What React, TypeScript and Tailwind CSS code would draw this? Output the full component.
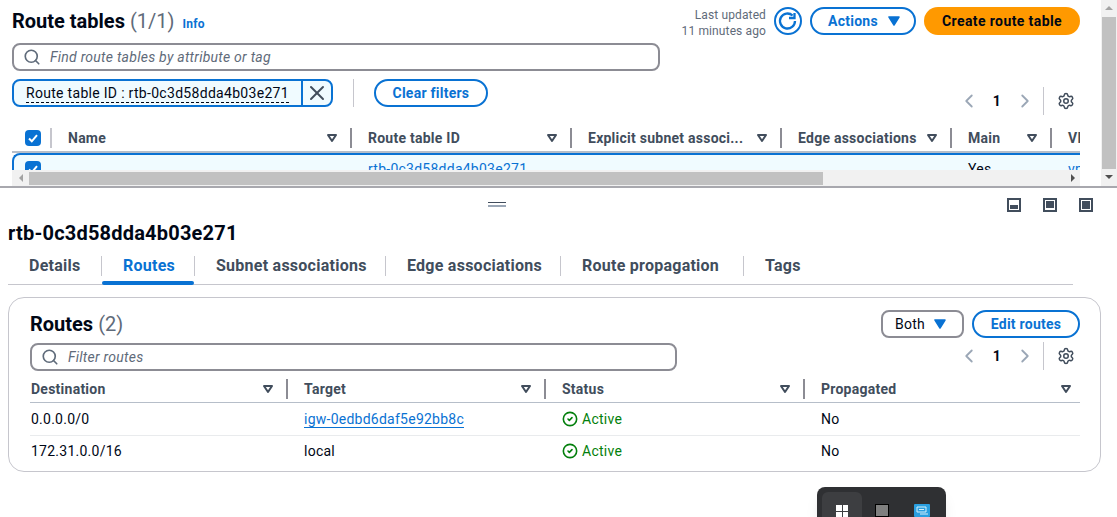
import React from 'react';
import { ChevronLeft, ChevronRight, CircleCheck, Search, Settings, X } from 'lucide-react';

function Caret({ solid = false }: { solid?: boolean }) {
  if (solid) {
    return (
      <svg width="12" height="10" viewBox="0 0 12 10" className="shrink-0">
        <path d="M1 1h10L6 9z" fill="#0972d3" stroke="#0972d3" strokeWidth="1.5" strokeLinejoin="round" />
      </svg>
    );
  }
  return (
    <svg width="12" height="10" viewBox="0 0 12 10" className="shrink-0">
      <path d="M2 2h8L6 8z" fill="none" stroke="#414d5c" strokeWidth="2" strokeLinejoin="round" />
    </svg>
  );
}

function Checkbox() {
  return (
    <span className="flex h-4 w-4 shrink-0 items-center justify-center rounded-[4px] bg-[#0972d3]">
      <svg width="12" height="12" viewBox="0 0 12 12">
        <path d="M2 6.5l2.8 2.8L10 3.2" fill="none" stroke="white" strokeWidth="2" />
      </svg>
    </span>
  );
}

function Pagination() {
  return (
    <div className="flex h-7 items-center">
      <span className="flex w-6 justify-center text-[#9ba7b6]">
        <ChevronLeft size={22} strokeWidth={2} />
      </span>
      <span className="ml-1 w-6 text-center text-sm font-bold text-[#000716]">1</span>
      <span className="ml-1 flex w-6 justify-center text-[#9ba7b6]">
        <ChevronRight size={22} strokeWidth={2} />
      </span>
      <span className="ml-[6px] h-7 w-px bg-[#c6c6cd]" />
      <span className="ml-[13px] mr-[5px] text-[#414d5c]">
        <Settings size={18} strokeWidth={2} />
      </span>
    </div>
  );
}

function SearchBox({ text, className }: { text: string; className: string }) {
  return (
    <div className={`flex h-7 items-center rounded-lg border-2 border-[#8c8c94] bg-white pl-[9px] ${className}`}>
      <Search size={18} strokeWidth={2.2} className="text-[#5f6b7a]" />
      <span className="ml-[9px] text-sm italic leading-[18px] text-[#5f6b7a]">{text}</span>
    </div>
  );
}

function HeaderCell({ label, className }: { label: string; className: string }) {
  return (
    <div className={`flex h-5 shrink-0 items-center justify-between border-r-2 border-[#8c8c94] pr-[12px] ${className}`}>
      <span className="text-sm font-bold text-[#414d5c]">{label}</span>
      <Caret />
    </div>
  );
}

function PaneIcon({ fill }: { fill: string }) {
  return (
    <span className="flex h-[14px] w-[14px] items-end border-2 border-[#414d5c] p-px">
      <span className={`w-full bg-[#414d5c] ${fill}`} />
    </span>
  );
}

function OuterTable() {
  return (
    <div className="mt-[10px] w-[1068px] overflow-hidden">
      <div className="flex h-7 items-center whitespace-nowrap border-b-2 border-[#b6bec9]">
        <div className="flex h-5 w-[40px] shrink-0 items-center border-r-2 border-[#c6c6cd] pl-[13px]">
          <Checkbox />
        </div>
        <HeaderCell label="Name" className="w-[300px] pl-[16px]" />
        <HeaderCell label="Route table ID" className="w-[220px] pl-[16px]" />
        <HeaderCell label="Explicit subnet associ..." className="w-[210px] pl-[16px]" />
        <HeaderCell label="Edge associations" className="w-[170px] pl-[16px]" />
        <HeaderCell label="Main" className="w-[100px] pl-[16px]" />
        <span className="pl-[16px] text-sm font-bold text-[#414d5c]">VPC</span>
      </div>
      <div className="flex h-[17px] overflow-hidden whitespace-nowrap rounded-tl-lg border-l-2 border-t-2 border-[#0972d3] bg-[#f0fbff] text-sm">
        <div className="w-[38px] shrink-0 pl-[11px] pt-[6px]">
          <Checkbox />
        </div>
        <div className="w-[300px] shrink-0" />
        <div className="w-[220px] shrink-0 pl-[16px] pt-[4px] text-[#0972d3]">rtb-0c3d58dda4b03e271</div>
        <div className="w-[380px] shrink-0" />
        <div className="w-[100px] shrink-0 pl-[16px] pt-[4px] text-[#000716]">Yes</div>
        <div className="pl-[16px] pt-[4px] text-[#0972d3]">vpc</div>
      </div>
    </div>
  );
}

function HorizontalScrollbar() {
  return (
    <div className="flex h-4 w-[1068px] items-center bg-[#f1f1f1]">
      <span className="flex w-[17px] justify-center">
        <span className="h-0 w-0 border-y-4 border-r-4 border-y-transparent border-r-[#a3a3a3]" />
      </span>
      <span className="h-[13px] w-[794px] bg-[#c1c1c1]" />
      <span className="ml-auto flex w-[15px] justify-center">
        <span className="h-0 w-0 border-y-4 border-l-4 border-y-transparent border-l-[#505050]" />
      </span>
    </div>
  );
}

function VerticalScrollbar() {
  return (
    <div className="flex w-4 shrink-0 flex-col items-center bg-[#f1f1f1]">
      <span className="mt-[6px] h-0 w-0 border-x-4 border-b-4 border-x-transparent border-b-[#a3a3a3]" />
      <span className="mt-[7px] h-[152px] w-[14px] bg-[#c1c1c1]" />
      <span className="mt-[6px] h-0 w-0 border-x-4 border-t-4 border-x-transparent border-t-[#505050]" />
    </div>
  );
}

function TopPanel() {
  return (
    <section className="flex h-[188px] border-b-2 border-[#a8a8ae]">
      <div className="flex-1 pl-3">
        <div className="mt-[7px] flex h-[28px] items-center justify-between pr-[21px]">
          <div className="flex items-baseline">
            <h1 className="text-xl font-bold tracking-normal text-[#000716]">
              Route tables <span className="font-normal text-[#5f6b7a]">(1/1)</span>
            </h1>
            <span className="ml-2 text-xs font-bold text-[#0972d3]">Info</span>
          </div>
          <div className="flex items-center">
            <div className="mt-1 text-right text-xs leading-4 tracking-[0.12px] text-[#5f6b7a]">
              <div>Last updated</div>
              <div>11 minutes ago</div>
            </div>
            <svg width="28" height="28" viewBox="0 0 28 28" className="ml-2">
              <circle cx="14" cy="14" r="13" fill="none" stroke="#0972d3" strokeWidth="2" />
              <path d="M21 14a7.5 7.5 0 1 1-2.4-5.5" fill="none" stroke="#0972d3" strokeWidth="2.3" />
              <path d="M20.5 6v5h-5.5" fill="none" stroke="#0972d3" strokeWidth="2.3" />
            </svg>
            <button className="ml-2 flex h-7 w-[106px] items-center gap-[10px] rounded-full border-2 border-[#0972d3] pl-[16px] text-sm font-bold text-[#0972d3]">
              Actions
              <Caret solid />
            </button>
            <button className="ml-2 h-7 w-[156px] rounded-full bg-[#ff9900] text-sm font-bold tracking-[0.4px] text-[#000716]">
              Create route table
            </button>
          </div>
        </div>
        <SearchBox text="Find route tables by attribute or tag" className="mt-2 w-[648px]" />
        <div className="mt-2 flex w-[1076px] items-start justify-between">
          <div className="flex items-center">
            <div className="flex h-7 items-center overflow-hidden rounded-lg border-2 border-[#0972d3] bg-[#f0fbff]">
              <span className="ml-3 border-b border-dashed border-[#000716] text-sm leading-[18px] tracking-[0.3px] text-[#000716]">
                Route table ID : rtb-0c3d58dda4b03e271
              </span>
              <span className="ml-[12px] flex h-full w-[30px] items-center justify-center border-l-2 border-[#0972d3] text-[#414d5c]">
                <X size={24} strokeWidth={2} />
              </span>
            </div>
            <span className="ml-5 h-7 w-px bg-[#c6c6cd]" />
            <button className="ml-5 h-7 w-[114px] rounded-full border-2 border-[#0972d3] text-sm font-bold text-[#0972d3]">
              Clear filters
            </button>
          </div>
          <div className="mt-2 pr-2">
            <Pagination />
          </div>
        </div>
        <OuterTable />
        <HorizontalScrollbar />
      </div>
      <VerticalScrollbar />
    </section>
  );
}

const tabs = [
  { label: 'Details', width: 'w-[94px]' },
  { label: 'Routes', width: 'w-[93px]' },
  { label: 'Subnet associations', width: 'w-[191px]' },
  { label: 'Edge associations', width: 'w-[175px]' },
  { label: 'Route propagation', width: 'w-[183px]' },
  { label: 'Tags', width: 'w-[76px]' },
];

function DetailHeader() {
  return (
    <div className="px-2">
      <div className="relative h-[27px]">
        <div className="ml-[480px] flex w-[18px] flex-col pt-[14px]">
          <span className="h-px bg-[#414d5c]" />
          <span className="mt-[2px] h-[2px] bg-[#9ba7b6]" />
        </div>
        <div className="absolute right-[16px] top-[10px] flex gap-[22px]">
          <PaneIcon fill="h-[4px]" />
          <PaneIcon fill="h-[7px] self-start" />
          <PaneIcon fill="h-full" />
        </div>
      </div>
      <h2 className="mt-[4px] text-xl font-bold leading-7 tracking-[0.2px] text-[#000716]">rtb-0c3d58dda4b03e271</h2>
      <div className="mt-[5px] flex h-[33px] w-[1065px] items-start border-b border-[#c6c6cd] pt-[4px]">
        {tabs.map((tab, i) => (
          <div
            key={tab.label}
            className={`relative flex h-5 items-center pl-[21px] text-base font-bold ${tab.width} ${
              tab.label === 'Routes' ? 'text-[#0972d3]' : 'text-[#414d5c]'
            } ${i < tabs.length - 1 ? 'border-r border-[#c6c6cd]' : ''}`}
          >
            {tab.label}
            {tab.label === 'Routes' && (
              <span className="absolute -bottom-[9px] left-0 right-0 h-[4px] rounded-full bg-[#0972d3]" />
            )}
          </div>
        ))}
      </div>
    </div>
  );
}

function ActiveStatus() {
  return (
    <span className="flex items-center gap-[4px] text-sm text-[#037f0c]">
      <CircleCheck size={16} strokeWidth={2.4} />
      Active
    </span>
  );
}

function RoutesCard() {
  return (
    <div className="ml-2 mt-3 h-[175px] w-[1093px] rounded-2xl border border-[#c6c6cd] pl-[21px] pr-[20px] pt-3">
      <div className="flex h-7 items-center justify-between">
        <h3 className="text-xl font-bold tracking-normal text-[#000716]">
          Routes <span className="font-normal text-[#5f6b7a]">(2)</span>
        </h3>
        <div className="flex items-center gap-2">
          <div className="flex h-7 w-[83px] items-center justify-between rounded-lg border-2 border-[#8c8c94] pl-[12px] pr-[16px] text-sm text-[#000716]">
            Both
            <Caret solid />
          </div>
          <button className="h-7 w-[108px] rounded-full border-2 border-[#0972d3] text-sm font-bold text-[#0972d3]">
            Edit routes
          </button>
        </div>
      </div>
      <div className="mt-[4px] flex items-start justify-between">
        <SearchBox text="Filter routes" className="mt-px w-[647px]" />
        <Pagination />
      </div>
      <div className="mt-[4px] flex h-7 items-center border-b border-[#b6bec9]">
        <HeaderCell label="Destination" className="w-[258px] pl-px" />
        <HeaderCell label="Target" className="w-[258px] pl-[16px]" />
        <HeaderCell label="Status" className="w-[259px] pl-[16px]" />
        <div className="flex flex-1 items-center justify-between pl-[16px] pr-[8px]">
          <span className="text-sm font-bold text-[#414d5c]">Propagated</span>
          <Caret />
        </div>
      </div>
      <div className="flex h-[33px] items-center border-b border-[#e9ebed] text-sm text-[#000716]">
        <div className="w-[258px] pl-px">0.0.0.0/0</div>
        <div className="w-[258px] pl-[16px]">
          <span className="border-b border-[#0972d3] text-[#0972d3]">igw-0edbd6daf5e92bb8c</span>
        </div>
        <div className="w-[259px] pl-[16px]">
          <ActiveStatus />
        </div>
        <div className="pl-[16px]">No</div>
      </div>
      <div className="flex h-[29px] items-center text-sm text-[#000716]">
        <div className="w-[258px] pl-px">172.31.0.0/16</div>
        <div className="w-[258px] pl-[16px]">local</div>
        <div className="w-[259px] pl-[16px]">
          <ActiveStatus />
        </div>
        <div className="pl-[16px]">No</div>
      </div>
    </div>
  );
}

function TaskbarPopup() {
  return (
    <div className="absolute left-[817px] top-[487px] flex h-[30px] w-[129px] rounded-t-lg bg-[#2f3033] pl-[5px] pt-[5px] shadow-lg">
      <div className="flex h-[25px] w-[40px] justify-center rounded-t-md bg-[#3d3e41] pt-[13px]">
        <span className="grid h-3 w-3 grid-cols-2 gap-px">
          <span className="bg-white" />
          <span className="bg-white" />
          <span className="bg-white" />
          <span className="bg-white" />
        </span>
      </div>
      <div className="ml-[13px] mt-3 h-[13px] w-[14px] border border-black bg-[#7f7f7f]" />
      <svg width="16" height="13" viewBox="0 0 16 13" className="ml-[25px] mt-3">
        <rect width="16" height="13" rx="1" fill="#2a9fe0" />
        <path d="M3 3h9v5H3zM5 5.5h5M6 10h8" fill="none" stroke="#d5f0fb" strokeWidth="1" />
      </svg>
    </div>
  );
}

export default function App() {
  return (
    <div className="relative h-[517px] w-[1117px] overflow-hidden bg-white font-['Roboto',sans-serif] tracking-[0.25px]">
      <TopPanel />
      <DetailHeader />
      <RoutesCard />
      <TaskbarPopup />
    </div>
  );
}
